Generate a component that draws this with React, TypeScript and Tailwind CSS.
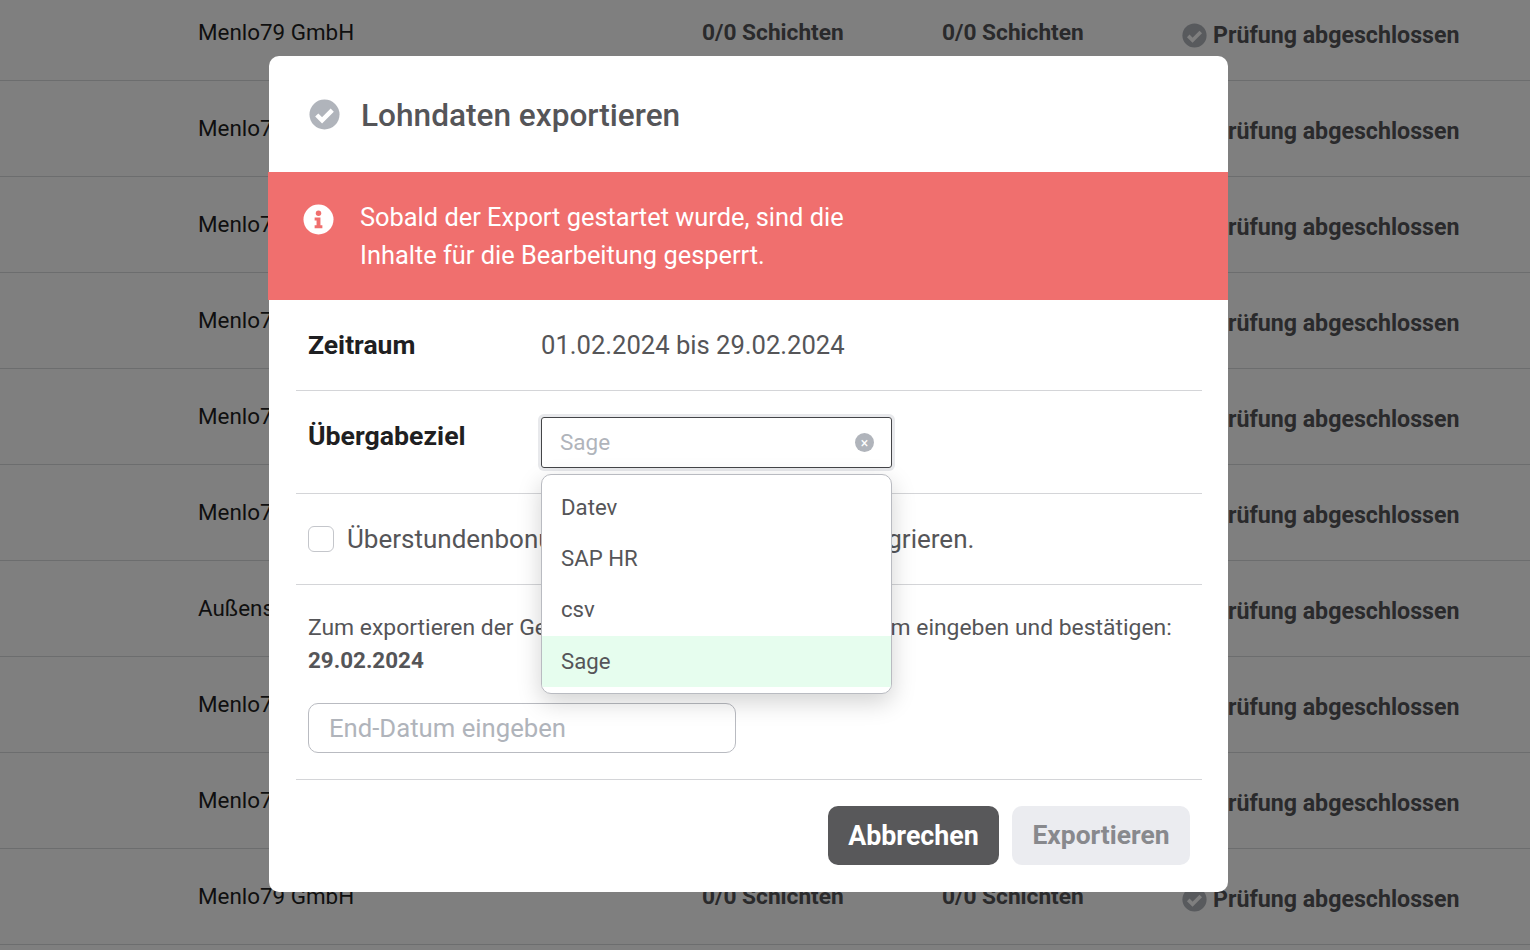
const rows = [
  "Menlo79 GmbH",
  "Menlo79 GmbH",
  "Menlo79 GmbH",
  "Menlo79 GmbH",
  "Menlo79 GmbH",
  "Menlo79 GmbH",
  "Außenstelle GmbH",
  "Menlo79 GmbH",
  "Menlo79 GmbH",
  "Menlo79 GmbH",
];

function CheckCircle({ className }: { className: string }) {
  return (
    <svg viewBox="0 0 32 32" className={className}>
      <circle cx="16" cy="16" r="15.5" fill="currentColor" />
      <path d="M8 16.5l5.5 5.5 10.5-10.5" fill="none" stroke="#fff" strokeWidth="4.6" />
    </svg>
  );
}

function InfoCircle() {
  return (
    <svg viewBox="0 0 32 32" className="h-[31px] w-[31px] shrink-0">
      <circle cx="16" cy="16" r="15.5" fill="#fff" />
      <circle cx="16" cy="9.5" r="2.8" fill="#f06f6e" />
      <path d="M12 14h6v8h2v3h-8v-3h2v-5h-2z" fill="#f06f6e" />
    </svg>
  );
}

function TableRow({ name }: { name: string }) {
  return (
    <div className="flex h-[96px] items-center border-b border-[#d9dadd] pl-[198px]">
      <div className="w-[504px] text-[22.4px] text-[#1f1f22]">{name}</div>
      <div className="w-[240px] pt-px text-[22.7px] font-bold text-[#555558]">0/0 Schichten</div>
      <div className="w-[240px] pt-px text-[22.7px] font-bold text-[#555558]">0/0 Schichten</div>
      <div className="flex items-center pt-[6px] text-[23.2px] font-bold text-[#555558]">
        <CheckCircle className="mr-[6px] h-[25px] w-[25px] text-[#b0b4bb]" />
        Prüfung abgeschlossen
      </div>
    </div>
  );
}

export default function App() {
  return (
    <div className="relative h-[950px] w-[1530px] overflow-hidden bg-white font-['Roboto',sans-serif]">
      <div className="-mt-[15px]">
        {rows.map((name, i) => (
          <TableRow key={i} name={name} />
        ))}
      </div>

      <div className="absolute inset-0 bg-black/50 pl-[269px] pt-[56px]">
        <div className="relative h-[836px] w-[959px] rounded-[10px] bg-white text-[#555558]">
          <header className="flex h-[116px] items-center pl-[40px]">
            <CheckCircle className="mr-[21px] h-[31px] w-[31px] text-[#b0b4bb]" />
            <h2 className="mt-[3px] text-[31.6px] font-medium">Lohndaten exportieren</h2>
          </header>

          <div className="-ml-px flex h-[128px] w-[960px] items-start bg-[#f06f6e] pl-[35px] pt-[32px] text-[25.4px] leading-[38px] text-white">
            <InfoCircle />
            <p className="ml-[26px] -mt-[6px]">
              Sobald der Export gestartet wurde, sind die
              <br />
              Inhalte für die Bearbeitung gesperrt.
            </p>
          </div>

          <div className="ml-[27px] mr-[26px]">
            <div className="flex h-[91px] items-center border-b border-[#d4d5d8] pl-[12px]">
              <div className="w-[233px] text-[26.5px] font-bold text-[#1f1f22]">Zeitraum</div>
              <div className="text-[25.6px]">01.02.2024 bis 29.02.2024</div>
            </div>

            <div className="flex h-[103px] border-b border-[#d4d5d8] pl-[12px] pt-[26px]">
              <div className="w-[233px] text-[26.7px] font-bold leading-[38px] text-[#1f1f22]">Übergabeziel</div>
              <div className="flex h-[51px] w-[351px] items-center justify-between rounded-[3px] border border-[#444548] pl-[18px] pr-[17px] text-[22.5px] text-[#b0b4bb] shadow-[0_0_0_3px_#e8e9ec]">
                <span className="pt-px">Sage</span>
                <span className="flex h-[19px] w-[19px] items-center justify-center rounded-full bg-[#b0b4bb] text-[14px] leading-none text-white">
                  ×
                </span>
              </div>
            </div>

            <div className="flex h-[91px] items-center border-b border-[#d4d5d8] pl-[12px]">
              <span className="mr-[13px] h-[26px] w-[26px] rounded-[6px] border border-[#c4c6cb]" />
              <span className="text-[26px]">Überstundenbonus in die Lohnexportdaten integrieren.</span>
            </div>

            <div className="h-[195px] border-b border-[#d4d5d8] pl-[12px] pt-[26px]">
              <p className="text-[22.9px] leading-[33px]">
                Zum exportieren der Gehaltsdaten bitte hier das End-Datum eingeben und bestätigen:
                <br />
                <strong className="text-[22.4px]">29.02.2024</strong>
              </p>
              <div className="mt-[26px] flex h-[50px] w-[428px] items-center rounded-[10px] border border-[#b9bbc1] pl-[20px] text-[25.7px] text-[#b0b4bb]">
                End-Datum eingeben
              </div>
            </div>

            <footer className="flex justify-end gap-[13px] pr-[12px] pt-[26px]">
              <button className="h-[59px] w-[171px] rounded-[10px] bg-[#58585a] pt-px text-[26.8px] font-bold text-white">
                Abbrechen
              </button>
              <button className="h-[59px] w-[178px] rounded-[10px] bg-[#ebecf0] text-[26.4px] font-bold text-[#88898d]">
                Exportieren
              </button>
            </footer>
          </div>

          <ul className="absolute left-[272px] top-[418px] h-[220px] w-[351px] overflow-hidden rounded-[10px] border border-[#b9bbc1] bg-white pt-[6px] text-[22.2px] shadow-[0_8px_24px_rgba(0,0,0,0.18)]">
            <li className="flex h-[51.5px] items-center pl-[19px] pt-px">Datev</li>
            <li className="flex h-[51.5px] items-center pl-[19px]">SAP HR</li>
            <li className="flex h-[51.5px] items-center pl-[19px]">csv</li>
            <li className="flex h-[51.5px] items-center bg-[#e6fdee] pl-[19px]">Sage</li>
          </ul>
        </div>
      </div>
    </div>
  );
}
